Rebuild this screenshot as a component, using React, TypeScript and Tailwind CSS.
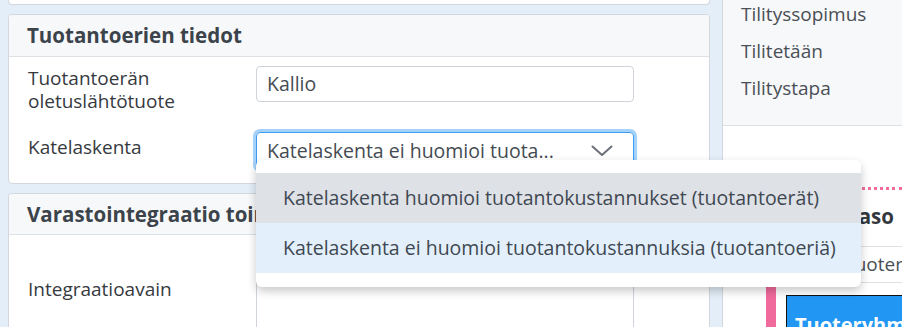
import React from "react";

export default function App() {
  return (
    <div
      className="relative w-[902px] h-[327px] overflow-hidden bg-[#e3eef8] flex text-[#3a3f45]"
      style={{ fontFamily: '"Open Sans", "Noto Sans", sans-serif' }}
    >
      {/* Left column */}
      <div className="w-[710px] pl-[8px] flex flex-col shrink-0">
        {/* bottom of previous card */}
        <div className="h-[5px] shrink-0 bg-white border border-t-0 border-[#d3d8de] rounded-b-[4px]" />
        {/* Tuotantoerien tiedot */}
        <div className="mt-[9px] h-[170px] shrink-0 bg-white border border-[#d3d8de] rounded-[4px] overflow-hidden">
          <div className="h-[42px] bg-[#f7f8fa] border-b border-[#dde1e5] flex items-center pl-[18px]">
            <span className="text-[20.5px] font-bold text-[#3b434b]">Tuotantoerien tiedot</span>
          </div>
          <div className="pt-[9px] pl-[19px] flex flex-col gap-[21px]">
            <div className="flex">
              <div className="w-[228px] text-[19px] leading-[23px] pt-[1px] text-[#363a3f]">
                <div>Tuotantoerän</div>
                <div>oletuslähtötuote</div>
              </div>
              <div className="w-[378px] h-[36px] border border-[#ced4da] rounded-[4px] flex items-center pl-[10px] text-[19.5px] text-[#444b52]">
                Kallio
              </div>
            </div>
            <div className="flex">
              <div className="w-[228px] text-[19px] leading-[23px] pt-[2px] text-[#363a3f]">Katelaskenta</div>
              <div className="w-[378px] h-[37px] -mt-[2px] border border-[#3d9bf0] rounded-[4px] ring-[3px] ring-[#a5d2fb] flex items-center pl-[10px] pr-[20px] text-[19.5px] text-[#444b52]">
                <span className="flex-1 whitespace-nowrap">Katelaskenta ei huomioi tuota...</span>
                <svg width="22" height="12" viewBox="0 0 22 12" fill="none">
                  <path d="M1.5 1.5 L11 10 L20.5 1.5" stroke="#6b7178" strokeWidth="2" strokeLinecap="round" strokeLinejoin="round" />
                </svg>
              </div>
            </div>
          </div>
        </div>
        {/* Varastointegraatio */}
        <div className="mt-[9px] flex-1 bg-white border border-b-0 border-[#d3d8de] rounded-t-[4px] overflow-hidden">
          <div className="h-[41px] bg-[#f7f8fa] border-b border-[#dde1e5] flex items-center pl-[18px]">
            <span className="text-[20.5px] font-bold text-[#3b434b] whitespace-nowrap">Varastointegraatio toiminnot</span>
          </div>
          <div className="pl-[19px] flex">
            <div className="w-[228px] pt-[43px] text-[19px] leading-[23px] text-[#363a3f]">Integraatioavain</div>
            <div className="w-[378px] h-[120px] mt-[10px] border border-[#ced4da] rounded-[4px]" />
          </div>
        </div>
      </div>

      {/* Right column */}
      <div className="ml-[12px] flex-1 min-w-0 bg-white border-l border-[#d3d8de] flex flex-col">
        <div className="h-[126px] shrink-0 bg-[#f7f8fa] border-b border-[#dde1e5] pl-[18px] pt-[3px] flex flex-col gap-[14px] text-[19px] leading-[23px] text-[#4a4f56]">
          <div>Tilityssopimus</div>
          <div>Tilitetään</div>
          <div>Tilitystapa</div>
        </div>
        <div className="pl-[18px] pt-[61px] shrink-0">
          <div className="border-t-[3px] border-dotted border-[#ef6d9c]" />
          <div className="pt-[14px] h-[56px] flex justify-end pr-[8px] text-[20.5px] font-bold text-[#33383d] leading-[24px] whitespace-nowrap">
            Tuotetaso
          </div>
          <div className="h-[37px] border-y border-[#dde1e5] flex items-center pl-[44px] text-[19px] text-[#4a4f56] whitespace-nowrap overflow-hidden">
            Valitse tuoteryhmä
          </div>
          <div className="flex pl-[25px]">
            <div className="w-[10px] h-[50px] shrink-0 bg-[#f06a9b]" />
            <div className="ml-[10px] mt-[12px] w-[140px] shrink-0 h-[60px] bg-[#2196f3] border border-[#111] pl-[8px] pt-[14px] text-[20px] font-bold text-white whitespace-nowrap">
              Tuoteryhmät
            </div>
          </div>
        </div>
      </div>

      {/* Dropdown menu */}
      <div className="absolute left-[256px] top-[160px] w-[605px] bg-white rounded-[6px] shadow-[0_4px_10px_rgba(0,0,0,0.22)] pt-[13px] pb-[14px]">
        <div className="h-[50px] bg-[#dee1e6] flex items-center pl-[27px] text-[19.5px] text-[#3f4852] whitespace-nowrap">
          Katelaskenta huomioi tuotantokustannukset (tuotantoerät)
        </div>
        <div className="h-[50px] bg-[#e3f0fb] flex items-center pl-[27px] text-[19.5px] text-[#3f4852] whitespace-nowrap">
          Katelaskenta ei huomioi tuotantokustannuksia (tuotantoeriä)
        </div>
      </div>
    </div>
  );
}
